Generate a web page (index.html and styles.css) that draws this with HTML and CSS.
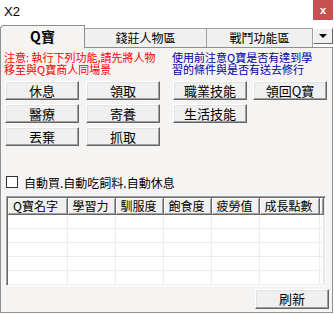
FILE: index.html
```html
<!DOCTYPE html>
<html lang="zh-Hant">
<head>
  <meta charset="UTF-8">
  <title>X2</title>
  <link rel="stylesheet" href="styles.css">
</head>
<body>
  <div class="titlebar">
    <span class="title">X2</span>
    <span class="close">x</span>
  </div>

  <div class="tabs">
    <div class="tab active">Q寶</div>
    <div class="tab tab2">錢莊人物區</div>
    <div class="tab tab3">戰鬥功能區</div>
    <div class="tab-more"><span class="arrow"></span></div>
  </div>

  <div class="panel">
    <div class="top">
      <div class="col left">
        <p class="note red">注意: 執行下列功能,請先將人物<br>移至與Q寶商人同場景</p>
        <div class="btns">
          <button>休息</button>
          <button>領取</button>
          <button>醫療</button>
          <button>寄養</button>
          <button>丟棄</button>
          <button>抓取</button>
        </div>
      </div>
      <div class="col right">
        <p class="note blue">使用前注意Q寶是否有達到學<br>習的條件與是否有送去修行</p>
        <div class="btns">
          <button>職業技能</button>
          <button>領回Q寶</button>
          <button>生活技能</button>
        </div>
      </div>
    </div>

    <label class="check">
      <span class="box"></span>
      <span>自動買.自動吃飼料.自動休息</span>
    </label>

    <div class="list">
      <table>
        <colgroup>
          <col style="width:59px">
          <col style="width:48px">
          <col style="width:48px">
          <col style="width:48px">
          <col style="width:48px">
          <col style="width:60px">
          <col>
        </colgroup>
        <thead>
          <tr><th>Q寶名字</th><th>學習力</th><th>馴服度</th><th>飽食度</th><th>疲勞值</th><th>成長點數</th><th></th></tr>
        </thead>
        <tbody>
          <tr><td></td><td></td><td></td><td></td><td></td><td></td><td></td></tr>
          <tr><td></td><td></td><td></td><td></td><td></td><td></td><td></td></tr>
          <tr><td></td><td></td><td></td><td></td><td></td><td></td><td></td></tr>
          <tr><td></td><td></td><td></td><td></td><td></td><td></td><td></td></tr>
          <tr><td></td><td></td><td></td><td></td><td></td><td></td><td></td></tr>
        </tbody>
      </table>
    </div>

    <div class="bottom">
      <button class="refresh">刷新</button>
    </div>
  </div>
</body>
</html>
```

FILE: styles.css
```css
body {
  margin: 0;
  width: 334px;
  height: 314px;
  overflow: hidden;
  background: #fff;
  font-family: "Noto Sans CJK TC", sans-serif;
  color: #000;
}

.titlebar {
  display: flex;
  justify-content: space-between;
  height: 25px;
}

.title {
  font: 13px/14px "Liberation Sans", sans-serif;
  padding: 5px 0 0 4px;
}

.close {
  width: 20px;
  height: 20px;
  margin-right: 1px;
  background: #c75050;
  color: #fff;
  font: bold 11px "Liberation Sans", sans-serif;
  display: flex;
  align-items: center;
  justify-content: center;
}

/* tab strip */
.tabs {
  display: flex;
  align-items: flex-end;
  height: 22px;
}

.tab {
  box-sizing: border-box;
  height: 19px;
  border: 1px solid #a0a0a0;
  border-bottom: none;
  background: #f0f0f0;
  font-size: 12px;
  line-height: 18px;
  text-align: center;
}

.tab.active {
  width: 85px;
  height: 23px;
  margin-bottom: -1px;
  border-color: #8e8f8f;
  border-top-left-radius: 4px;
  background: #f5f4f2;
  font-size: 14px;
  font-weight: bold;
  line-height: 21px;
}

.tab2 { width: 122px; border-left: none; }
.tab3 { width: 106px; border-left: none; }

.tab-more {
  box-sizing: border-box;
  align-self: flex-start;
  margin-top: 3px;
  width: 20px;
  height: 16px;
  background: #f0f0f0;
  border: 1px solid;
  border-color: #fff #696969 #696969 #fff;
  display: flex;
  align-items: center;
  justify-content: center;
}

.arrow {
  width: 0;
  height: 0;
  border-left: 4px solid transparent;
  border-right: 4px solid transparent;
  border-top: 4px solid #000;
}

/* panel */
.panel {
  box-sizing: border-box;
  width: 333px;
  height: 266px;
  border: 1px solid #8e8f8f;
  background: #f5f4f2;
  padding: 3px 0 0 4px;
}

.top {
  display: flex;
}

.col.left { width: 168px; }

.note {
  margin: 0 0 6px -1px;
  font-size: 11px;
  line-height: 12px;
  white-space: nowrap;
}

.red { color: #ff0000; }
.blue { color: #0000a0; }

.btns {
  display: grid;
  grid-template-columns: 74px 74px;
  column-gap: 7px;
  row-gap: 4px;
}

.right .btns { column-gap: 6px; }

button {
  box-sizing: border-box;
  height: 19px;
  padding: 0;
  background: #f0f0f0;
  border: 1px solid;
  border-color: #fff #646464 #646464 #fff;
  box-shadow: inset -1px -1px #a0a0a0, inset 1px 1px #e3e3e3;
  font-family: "Noto Sans CJK TC", sans-serif;
  font-size: 13px;
  line-height: 16px;
  color: #000;
}

.check {
  display: flex;
  align-items: center;
  gap: 6px;
  height: 12px;
  margin: 30px 0 0 1px;
  font-size: 12px;
}

.box {
  box-sizing: border-box;
  width: 12px;
  height: 12px;
  background: #fff;
  border: 1px solid #333;
}

/* list view */
.list {
  box-sizing: border-box;
  width: 320px;
  height: 90px;
  margin: 8px 0 0 1px;
  background: #fff;
  border: 1px solid;
  border-color: #a0a0a0 #fff #fff #a0a0a0;
  box-shadow: inset 1px 1px #696969, inset -1px -1px #e3e3e3;
  padding: 1px 1px 0 1px;
  overflow: hidden;
}

table {
  width: 100%;
  table-layout: fixed;
  border-collapse: collapse;
  font-size: 12px;
}

th {
  box-sizing: border-box;
  height: 16px;
  padding: 0 0 0 5px;
  background: #f0f0f0;
  border-right: 1px solid #696969;
  border-bottom: 1px solid #696969;
  box-shadow: inset 1px 1px #fff, inset -1px -1px #a0a0a0;
  font-weight: normal;
  text-align: left;
  line-height: 14px;
  white-space: nowrap;
  overflow: hidden;
}

td {
  height: 13px;
  padding: 0;
  border-right: 1px solid #ececec;
  border-bottom: 1px solid #ececec;
}

.bottom {
  display: flex;
  justify-content: flex-end;
  margin-top: 3px;
  padding-right: 3px;
}

.refresh {
  width: 74px;
  height: 20px;
}
```
